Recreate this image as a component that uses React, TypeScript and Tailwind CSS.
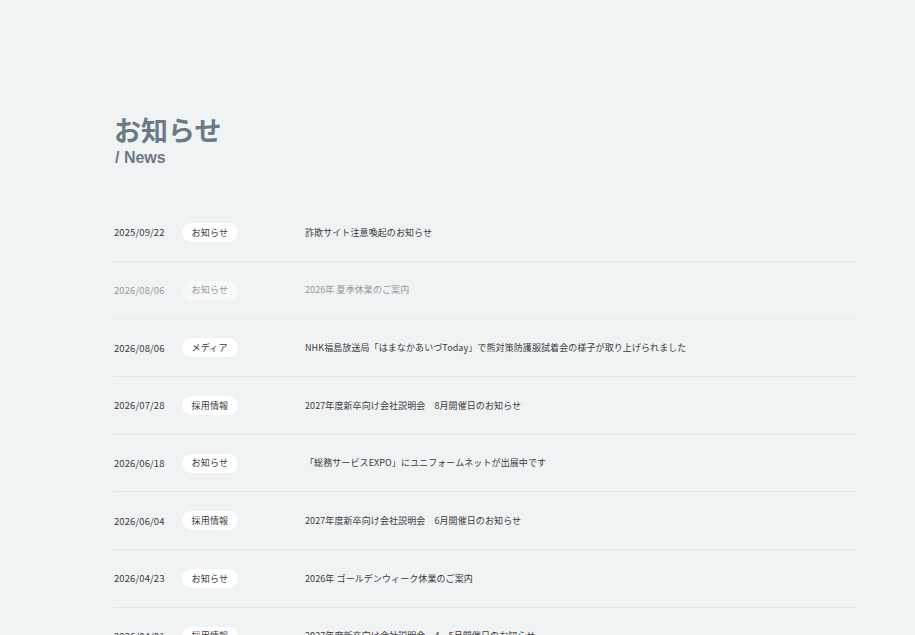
const news = [
  { date: "2025/09/22", tag: "お知らせ", title: "詐欺サイト注意喚起のお知らせ" },
  { date: "2026/08/06", tag: "お知らせ", title: "2026年 夏季休業のご案内", faded: true },
  {
    date: "2026/08/06",
    tag: "メディア",
    title: "NHK福島放送局「はまなかあいづToday」で熊対策防護服試着会の様子が取り上げられました",
  },
  { date: "2026/07/28", tag: "採用情報", title: "2027年度新卒向け会社説明会　8月開催日のお知らせ" },
  { date: "2026/06/18", tag: "お知らせ", title: "「総務サービスEXPO」にユニフォームネットが出展中です" },
  { date: "2026/06/04", tag: "採用情報", title: "2027年度新卒向け会社説明会　6月開催日のお知らせ" },
  { date: "2026/04/23", tag: "お知らせ", title: "2026年 ゴールデンウィーク休業のご案内" },
  { date: "2026/04/01", tag: "採用情報", title: "2027年度新卒向け会社説明会　4・5月開催日のお知らせ" },
];

export default function App() {
  return (
    <div
      className="min-h-screen bg-[#f0f3f4] pl-[114px] pr-[58px] pt-[114px] text-[#3a3a3a]"
      style={{ fontFamily: '"Noto Sans CJK JP", "Noto Sans", sans-serif' }}
    >
      <h1 className="text-[27px] font-bold leading-[32px] text-[#6c7a86]">お知らせ</h1>
      <p
        className="mt-[2px] pl-[1px] text-[16px] font-bold leading-[20px] text-[#6c7a86]"
        style={{ fontFamily: '"Liberation Sans", Arial, sans-serif' }}
      >
        / News
      </p>

      <ul className="mt-[36px]">
        {news.map((item, i) => (
          <li
            key={i}
            className={`flex h-[57.7px] items-center border-b border-[#e2e6e8] ${item.faded ? "opacity-50" : ""}`}
          >
            <div className="flex w-[191px] shrink-0 items-center">
              <span className="text-[9.5px] tracking-[0.01em]">{item.date}</span>
              <span className="ml-[17px] flex h-[19px] items-center rounded-full bg-white px-[10px] text-[9px] tracking-[0.02em]">
                {item.tag}
              </span>
            </div>
            <span className="text-[9px] tracking-[0.01em]">{item.title}</span>
          </li>
        ))}
      </ul>
    </div>
  );
}
